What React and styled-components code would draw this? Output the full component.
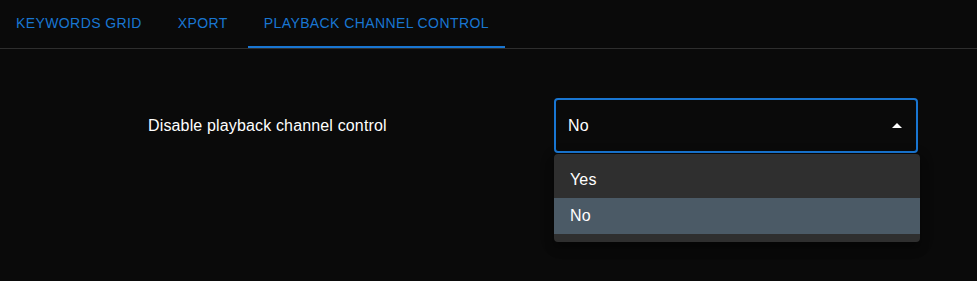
import React, { useState } from 'react';
import styled, { createGlobalStyle } from 'styled-components';

const GlobalStyle = createGlobalStyle`
  html, body {
    margin: 0;
    padding: 0;
    background-color: #0a0a0a;
    font-family: "Liberation Sans", Arial, sans-serif;
    color: #fff;
  }
`;

const Page = styled.div`
  width: 977px;
  height: 281px;
  background-color: #0a0a0a;
`;

const TabBar = styled.div`
  display: flex;
  height: 49px;
  border-bottom: 1px solid #2e2e2e;
  box-sizing: border-box;
`;

const Tab = styled.button`
  position: relative;
  min-width: 90px;
  padding: 12px 16px;
  background: none;
  border: 0;
  color: #1976d2;
  font-family: inherit;
  font-size: 14px;
  font-weight: 400;
  letter-spacing: 0.4px;
  text-transform: uppercase;
  line-height: 1.25;
  cursor: pointer;

  &::after {
    content: '';
    position: absolute;
    left: 0;
    right: 0;
    bottom: 0;
    height: 2px;
    background-color: ${p => (p.$active ? '#1976d2' : 'transparent')};
  }
`;

const Content = styled.div`
  padding: 49px 0 0 148px;
`;

const Row = styled.div`
  display: flex;
  align-items: center;
`;

const Label = styled.div`
  flex: 0 0 406px;
  font-size: 16px;
  line-height: 1.5;
  letter-spacing: 0.15px;
`;

const SelectWrap = styled.div`
  position: relative;
  width: 364px;
`;

const SelectBox = styled.div`
  display: flex;
  align-items: center;
  justify-content: space-between;
  height: 55px;
  box-sizing: border-box;
  padding: 0 7px 0 12px;
  border: 2px solid #1976d2;
  border-radius: 4px;
  font-size: 16px;
  letter-spacing: 0.15px;
  cursor: pointer;
`;

const Arrow = styled.svg`
  width: 24px;
  height: 24px;
  fill: #fff;
`;

const Menu = styled.ul`
  position: absolute;
  top: 56px;
  left: 0;
  width: 366px;
  margin: 0;
  padding: 8px 0;
  list-style: none;
  background-color: #2f2f2f;
  border-radius: 4px;
  box-shadow: 0 5px 5px -3px rgba(0, 0, 0, 0.2), 0 8px 10px 1px rgba(0, 0, 0, 0.14),
    0 3px 14px 2px rgba(0, 0, 0, 0.12);
`;

const Item = styled.li`
  padding: 6px 16px;
  font-size: 16px;
  line-height: 24px;
  letter-spacing: 0.15px;
  background-color: ${p => (p.$selected ? '#4b5a66' : 'transparent')};
  cursor: pointer;
`;

const tabs = ['Keywords grid', 'Xport', 'Playback channel control'];
const options = ['Yes', 'No'];

export default function App() {
  const [tab, setTab] = useState(2);
  const [value, setValue] = useState('No');
  const [open, setOpen] = useState(true);

  return (
    <Page>
      <GlobalStyle />
      <TabBar>
        {tabs.map((t, i) => (
          <Tab key={t} $active={i === tab} onClick={() => setTab(i)}>
            {t}
          </Tab>
        ))}
      </TabBar>
      <Content>
        <Row>
          <Label>Disable playback channel control</Label>
          <SelectWrap>
            <SelectBox onClick={() => setOpen(!open)}>
              <span>{value}</span>
              <Arrow viewBox="0 0 24 24">
                <path d={open ? 'M7 14l5-5 5 5z' : 'M7 10l5 5 5-5z'} />
              </Arrow>
            </SelectBox>
            {open && (
              <Menu>
                {options.map(o => (
                  <Item
                    key={o}
                    $selected={o === value}
                    onClick={() => {
                      setValue(o);
                      setOpen(false);
                    }}
                  >
                    {o}
                  </Item>
                ))}
              </Menu>
            )}
          </SelectWrap>
        </Row>
      </Content>
    </Page>
  );
}
